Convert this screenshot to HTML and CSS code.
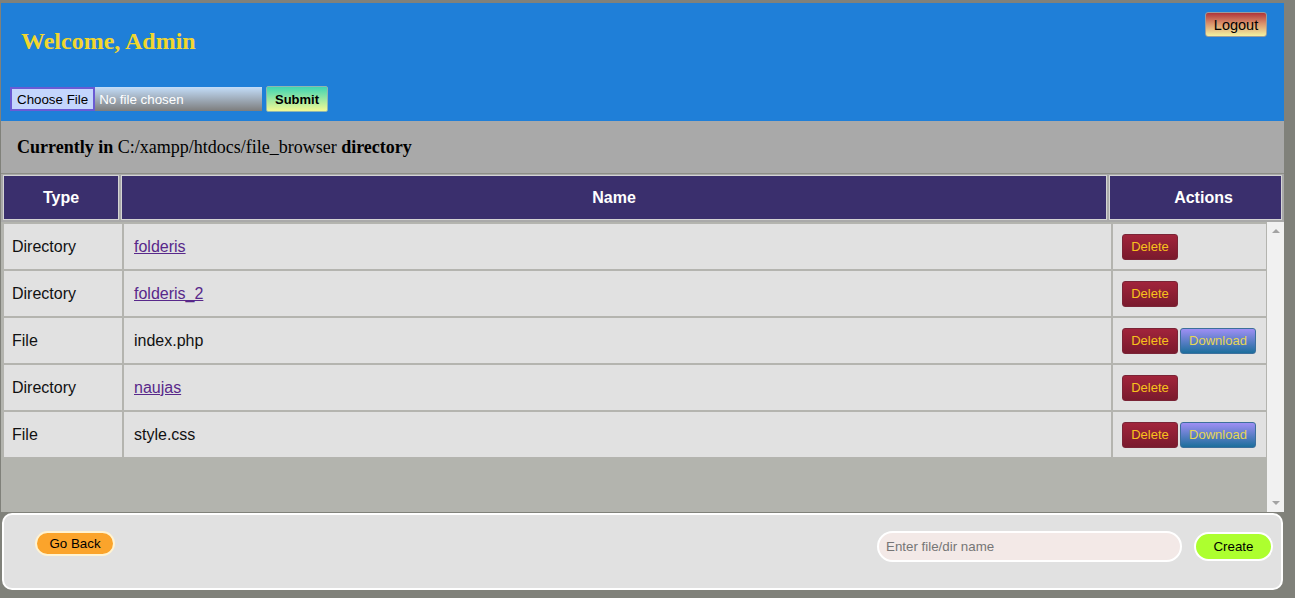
FILE: index.html
```html
<!DOCTYPE html>
<html lang="en">
<head>
<meta charset="utf-8">
<title>File browser</title>
<link rel="stylesheet" href="styles.css">
</head>
<body>
<div class="page">
  <header class="topbar">
    <div class="topbar-row">
      <h2 class="welcome">Welcome, Admin</h2>
      <button class="logout" type="button">Logout</button>
    </div>
    <form class="upload">
      <input class="file-input" type="file" name="file"><button class="submit" type="button">Submit</button>
    </form>
  </header>

  <div class="dirbar">
    <p class="dirtext"><b>Currently in</b> C:/xampp/htdocs/file_browser <b>directory</b></p>
  </div>

  <div class="thead">
    <div class="th">Type</div>
    <div class="th">Name</div>
    <div class="th th-actions">Actions</div>
  </div>

  <div class="tbody-wrap">
    <div class="tbody">
      <div class="tr">
        <div class="td">Directory</div>
        <div class="td td-name"><a class="link" href="#">folderis</a></div>
        <div class="td actions"><button class="btn-delete" type="button">Delete</button></div>
      </div>
      <div class="tr">
        <div class="td">Directory</div>
        <div class="td td-name"><a class="link" href="#">folderis_2</a></div>
        <div class="td actions"><button class="btn-delete" type="button">Delete</button></div>
      </div>
      <div class="tr">
        <div class="td">File</div>
        <div class="td td-name">index.php</div>
        <div class="td actions"><button class="btn-delete" type="button">Delete</button><button class="btn-download" type="button">Download</button></div>
      </div>
      <div class="tr">
        <div class="td">Directory</div>
        <div class="td td-name"><a class="link" href="#">naujas</a></div>
        <div class="td actions"><button class="btn-delete" type="button">Delete</button></div>
      </div>
      <div class="tr">
        <div class="td">File</div>
        <div class="td td-name">style.css</div>
        <div class="td actions"><button class="btn-delete" type="button">Delete</button><button class="btn-download" type="button">Download</button></div>
      </div>
    </div>
    <div class="scrollbar" aria-hidden="true">
      <span class="arrow arrow-up"></span>
      <span class="arrow arrow-down"></span>
    </div>
  </div>

  <footer class="footer">
    <button class="goback" type="button">Go Back</button>
    <div class="create-form">
      <input class="name-input" type="text" placeholder="Enter file/dir name">
      <button class="create" type="button">Create</button>
    </div>
  </footer>
</div>
</body>
</html>
```

FILE: styles.css
```css
* { box-sizing: border-box; }

body {
  margin: 0;
  background: #80817a;
  font-family: "Liberation Sans", Arial, sans-serif;
}

.page {
  margin: 3px 11px 0 1px;
}

/* header */
.topbar {
  background: #1f7fd8;
  padding: 0 0 9px 0;
}
.topbar-row {
  display: flex;
  justify-content: space-between;
  align-items: flex-start;
}
.welcome {
  margin: 24px 0 0 20px;
  font-family: "Liberation Serif", "Times New Roman", serif;
  font-size: 24px;
  line-height: 28px;
  font-weight: bold;
  color: #f2d62e;
}
.logout {
  margin: 9px 17px 0 0;
  height: 25px;
  width: 62px;
  padding: 0;
  border: 1px solid #9c9c9c;
  border-radius: 3px;
  background: linear-gradient(#b0353b, #d9906a 45%, #f4f2a0);
  font-family: "Liberation Sans", Arial, sans-serif;
  font-size: 14.5px;
  color: #000;
}
.upload {
  margin: 31px 0 0 9px;
  display: flex;
  align-items: center;
  gap: 4px;
  height: 26px;
}
.file-input {
  width: 252px;
  height: 24px;
  padding: 0;
  border: none;
  background: linear-gradient(#c3ddf9, #7d7d7d);
  color: #fff;
  font-family: "Liberation Sans", Arial, sans-serif;
  font-size: 13.33px;
}
.file-input::file-selector-button {
  height: 24px;
  margin: 0 4px 0 0;
  padding: 0 5px;
  border: 2px solid #6a5bd4;
  background: #c4d6fd;
  color: #000;
  font-family: "Liberation Sans", Arial, sans-serif;
  font-size: 13.33px;
}
.submit {
  width: 62px;
  height: 26px;
  padding: 0;
  border: 1px solid #8fb6b0;
  border-radius: 2px;
  background: linear-gradient(#3fd5b2, #f3f994);
  font-family: "Liberation Sans", Arial, sans-serif;
  font-size: 13px;
  font-weight: bold;
  color: #000;
}

/* current directory */
.dirbar {
  background: #a9a9a9;
  height: 52px;
  display: flex;
  align-items: center;
  padding-left: 16px;
}
.dirtext {
  margin: 0;
  font-family: "Liberation Serif", "Times New Roman", serif;
  font-size: 18px;
  color: #000;
}

/* table head */
.thead {
  display: grid;
  grid-template-columns: 116px 986px 173px;
  gap: 2px;
  padding: 1px 2px 2px;
  background: #a9a9a9;
  border-top: 1px solid #8d8e87;
}
.th {
  height: 45px;
  background: #3a2f6d;
  border: 1px solid #d4d4d4;
  color: #fff;
  font-weight: bold;
  font-size: 16px;
  display: flex;
  align-items: center;
  justify-content: center;
}
.th-actions {
  padding-left: 16px;
}

/* table body */
.tbody-wrap {
  display: flex;
  height: 290px;
  background: #b3b4ae;
}
.tbody {
  flex: 1;
  overflow-y: auto;
  padding: 1px 0 0 2px;
}
.scrollbar {
  width: 17px;
  background: #f1f1f1;
  display: flex;
  flex-direction: column;
  justify-content: space-between;
  align-items: center;
  padding: 7px 0 7px;
}
.arrow {
  width: 0;
  height: 0;
  border-left: 4px solid transparent;
  border-right: 4px solid transparent;
}
.arrow-up {
  border-bottom: 4px solid #a3a3a3;
}
.arrow-down {
  border-top: 4px solid #a3a3a3;
}
.tr {
  display: grid;
  grid-template-columns: 120px 989px 155px;
}
.td {
  height: 47px;
  background: #e1e1e1;
  border: 1px solid #b4b4af;
  padding: 0 8px;
  display: flex;
  align-items: center;
  font-size: 16px;
  color: #111;
}
.td-name {
  padding-left: 10px;
}
.link {
  color: #58288a;
  text-decoration: underline;
}
.actions {
  gap: 2px;
  padding-left: 9px;
}
.btn-delete,
.btn-download {
  height: 26px;
  padding: 0;
  border-radius: 3px;
  font-family: "Liberation Sans", Arial, sans-serif;
  font-size: 13px;
}
.btn-delete {
  width: 56px;
  border: 1px solid #7a2436;
  background: linear-gradient(#a1243b, #7a1a2d);
  color: #f8c11c;
}
.btn-download {
  width: 76px;
  border: 1px solid #3c6f9c;
  background: linear-gradient(#9e8ff4, #1c6e9c);
  color: #e6d655;
}

/* footer */
.footer {
  margin: 1px 1px 0 1px;
  height: 77px;
  background: #e1e1e1;
  border: 2px solid #fff;
  border-radius: 10px;
  display: flex;
  justify-content: space-between;
  align-items: flex-start;
  padding: 16px 8px 0 31px;
}
.goback {
  width: 80px;
  height: 25px;
  padding: 0;
  border: 2px solid #fff3d2;
  border-radius: 13px;
  background: #fba42b;
  color: #000;
  font-family: "Liberation Sans", Arial, sans-serif;
  font-size: 13.33px;
}
.create-form {
  display: flex;
  align-items: flex-start;
  gap: 12px;
}
.name-input {
  width: 305px;
  height: 31px;
  border: 2px solid #fff;
  border-radius: 16px;
  background: #f3e9e7;
  padding: 0 7px;
  font-family: "Liberation Sans", Arial, sans-serif;
  font-size: 13.33px;
  color: #000;
  outline: none;
}
.name-input::placeholder {
  color: #767676;
}
.create {
  margin-top: 1px;
  width: 79px;
  height: 29px;
  padding: 0;
  border: 2px solid #fff;
  border-radius: 15px;
  background: #adff2f;
  color: #000;
  font-family: "Liberation Sans", Arial, sans-serif;
  font-size: 13.33px;
}
```
